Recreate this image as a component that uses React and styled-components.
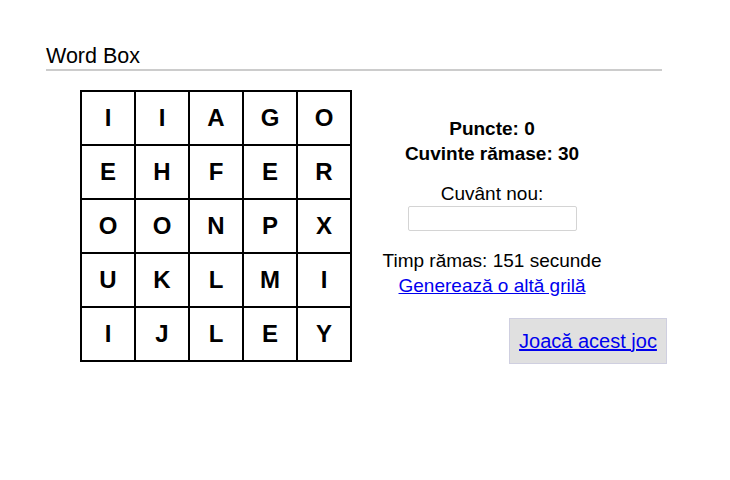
import React from 'react';
import styled, { createGlobalStyle } from 'styled-components';

const GlobalStyle = createGlobalStyle`
    body {
        margin: 0;
        background: #fff;
        font-family: "Liberation Sans", Arial, sans-serif;
        color: #000;
    }
`;

const letters = [
    ['I', 'I', 'A', 'G', 'O'],
    ['E', 'H', 'F', 'E', 'R'],
    ['O', 'O', 'N', 'P', 'X'],
    ['U', 'K', 'L', 'M', 'I'],
    ['I', 'J', 'L', 'E', 'Y'],
];

export default function App() {
    return (
        <>
            <GlobalStyle />
            <Page>
                <Title>Word Box</Title>
                <Main>
                    <Board>
                        {letters.flat().map((l, i) => (
                            <Cell key={i}>{l}</Cell>
                        ))}
                    </Board>
                    <Side>
                        <Info>
                            <Stat>Puncte: 0</Stat>
                            <Stat>Cuvinte rămase: 30</Stat>
                            <Label>Cuvânt nou:</Label>
                            <WordInput type="text" />
                            <Timer>Timp rămas: 151 secunde</Timer>
                            <Link href="#">Generează o altă grilă</Link>
                        </Info>
                        <PlayBox>
                            <Link href="#">Joacă acest joc</Link>
                        </PlayBox>
                    </Side>
                </Main>
            </Page>
        </>
    );
}

const Page = styled.div`
    width: 616px;
    padding: 44px 0 0 46px;
`;

const Title = styled.h1`
    margin: 0;
    font-size: 21.5px;
    font-weight: 400;
    line-height: 24px;
    padding-bottom: 1px;
    border-bottom: 2px solid #cccccc;
`;

const Main = styled.div`
    display: flex;
    align-items: flex-start;
    margin-top: 19px;
`;

const Board = styled.div`
    display: grid;
    grid-template-columns: repeat(5, 52px);
    grid-auto-rows: 52px;
    gap: 2px;
    margin-left: 34px;
    background: #000;
    border: 2px solid #000;
`;

const Cell = styled.div`
    display: flex;
    align-items: center;
    justify-content: center;
    background: #fff;
    font-size: 24px;
    font-weight: 700;
`;

const Side = styled.div`
    display: flex;
    flex-direction: column;
    width: 287px;
    flex-shrink: 0;
    margin-left: 28px;
`;

const Info = styled.div`
    display: flex;
    flex-direction: column;
    align-items: center;
    width: 224px;
    padding-top: 26px;
    font-size: 19px;
    line-height: 25px;
`;

const Stat = styled.div`
    font-weight: 700;
`;

const Label = styled.div`
    margin-top: 15px;
`;

const WordInput = styled.input`
    box-sizing: border-box;
    width: 169px;
    height: 25px;
    border: 1px solid #d4d4d4;
    border-radius: 2px;
    outline: none;
`;

const Timer = styled.div`
    margin-top: 17px;
`;

const Link = styled.a`
    color: #0000ee;
    text-decoration: underline;
`;

const PlayBox = styled.div`
    align-self: flex-end;
    box-sizing: border-box;
    width: 158px;
    height: 46px;
    margin-top: 20px;
    display: flex;
    align-items: center;
    justify-content: center;
    background: #e0e0e0;
    border: 1px solid #cfcfe0;
    font-size: 20px;
`;
